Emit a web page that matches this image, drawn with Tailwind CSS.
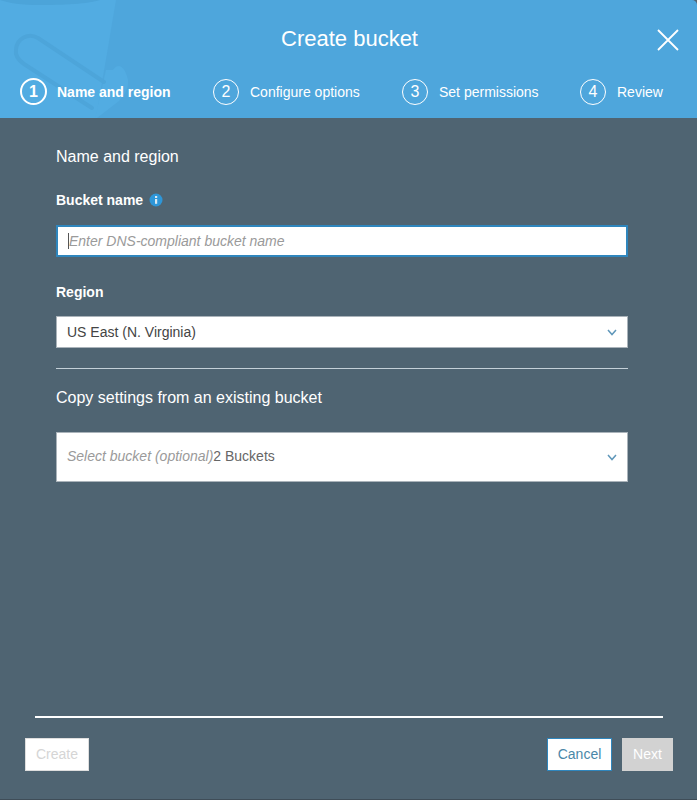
<!DOCTYPE html>
<html lang="en">
<head>
    <meta charset="UTF-8">
    <title>Create bucket</title>
    <script src="https://cdn.jsdelivr.net/npm/@tailwindcss/browser@4"></script>
</head>
<body class="bg-[#4f6472] font-['Liberation_Sans',Arial,sans-serif]">
    <div class="w-[697px] h-[800px] flex flex-col overflow-hidden border-b border-[#3f4d58]">
        <!-- header -->
        <header class="relative h-[118px] shrink-0 bg-[#4ea6dc] text-white overflow-hidden rounded-tr-[5px]">
            <svg class="absolute left-0 top-0" width="130" height="118" viewBox="0 0 130 118" fill="none">
                <path d="M0 0H116L96 118H0Z" fill="#52ace2"/>
                <path d="M0 0H100C92 3 70 5 40 5C22 5 8 3 0 0Z" fill="#4ca4d9"/>
                <path d="M113 70C118 62 125 66 128 80C129 90 123 96 119 101L97 118H95L106 70Z" fill="#52ace2"/>
                <path d="M104 82L38 38C28 32 17 39 16 49C15 55 18 60 24 64L92 108" stroke="#4da5da" stroke-width="4" stroke-linecap="round"/>
            </svg>
            <h1 class="relative pt-[25px] pl-[2px] text-center text-[22px] leading-[28px]">Create bucket</h1>
            <button class="absolute left-[657px] top-[29px]">
                <svg width="22" height="22" viewBox="0 0 22 22" stroke="white" stroke-width="1.8" fill="none" class="block"><path d="M1 1L21 21M21 1L1 21"/></svg>
            </button>
            <nav class="absolute left-[20px] top-[78px] flex items-center h-[27px] text-[14px]">
                <div class="flex items-center font-bold w-[193px]">
                    <span class="w-[27px] h-[27px] rounded-full border-2 border-white flex items-center justify-center text-[16px]">1</span>
                    <span class="ml-[10px] mt-[2px]">Name and region</span>
                </div>
                <div class="flex items-center w-[189px]">
                    <span class="w-[26px] h-[26px] rounded-full border border-white flex items-center justify-center text-[16px]">2</span>
                    <span class="ml-[11px] mt-[2px]">Configure options</span>
                </div>
                <div class="flex items-center w-[178px]">
                    <span class="w-[26px] h-[26px] rounded-full border border-white flex items-center justify-center text-[16px]">3</span>
                    <span class="ml-[11px] mt-[2px]">Set permissions</span>
                </div>
                <div class="flex items-center">
                    <span class="w-[26px] h-[26px] rounded-full border border-white flex items-center justify-center text-[16px]">4</span>
                    <span class="ml-[11px] mt-[2px]">Review</span>
                </div>
            </nav>
        </header>

        <!-- form -->
        <main class="flex-1 pl-[56px] pr-[69px] text-white">
            <h2 class="mt-[29px] text-[16px] leading-[20px]">Name and region</h2>
            <div class="mt-[24px] flex items-center gap-[6px] h-[18px] text-[14px] font-bold">
                Bucket name
                <svg width="14" height="14" viewBox="0 0 14 14"><circle cx="7" cy="7" r="6.5" fill="#2e96d8"/><rect x="6" y="6" width="2.2" height="4.8" fill="#dbeaf3"/><rect x="6" y="3" width="2.2" height="2" fill="#dbeaf3"/></svg>
            </div>
            <div class="mt-[16px] h-[32px] bg-white border-2 border-[#2f86bd] flex items-center pl-[10px] text-[14px] italic text-[#9a9a9a]">
                <span class="w-px h-[16px] bg-[#555]"></span>Enter DNS-compliant bucket name
            </div>
            <div class="mt-[26px] h-[18px] text-[14px] font-bold flex items-center">Region</div>
            <div class="mt-[15px] h-[32px] bg-white border border-[#aab3ba] flex items-center justify-between pl-[10px] pr-[10px] text-[14px] text-[#444]">
                US East (N. Virginia)
                <svg width="10" height="7" viewBox="0 0 10 7" fill="none" stroke="#5f97ba" stroke-width="1.5"><path d="M1 1L5 5.5L9 1"/></svg>
            </div>
            <div class="mt-[20px] h-px bg-[#c4d0d8]"></div>
            <h2 class="mt-[19px] text-[16px] leading-[20px]">Copy settings from an existing bucket</h2>
            <div class="mt-[24px] h-[50px] bg-white border border-[#aab3ba] flex justify-between pl-[10px] pr-[10px] text-[14px] text-[#666]">
                <span class="mt-[15px] leading-[17px]"><i class="text-[#9a9a9a]">Select bucket (optional)</i>2 Buckets</span>
                <svg class="mt-[21px]" width="10" height="7" viewBox="0 0 10 7" fill="none" stroke="#5f97ba" stroke-width="1.5"><path d="M1 1L5 5.5L9 1"/></svg>
            </div>
        </main>

        <!-- footer -->
        <footer class="shrink-0 h-[83px] pl-[25px] pr-[24px]">
            <div class="ml-[10px] mr-[10px] h-[2px] bg-white"></div>
            <div class="mt-[20px] flex items-center text-[14px]">
                <button class="w-[64px] h-[33px] bg-white border border-[#dedede] text-[#d5d5d5]">Create</button>
                <button class="ml-auto w-[65px] h-[33px] bg-white border border-[#2f86bd] text-[#4a87a8]">Cancel</button>
                <button class="ml-[10px] w-[51px] h-[33px] bg-[#d2d2d2] text-white">Next</button>
            </div>
        </footer>
    </div>
</body>
</html>
